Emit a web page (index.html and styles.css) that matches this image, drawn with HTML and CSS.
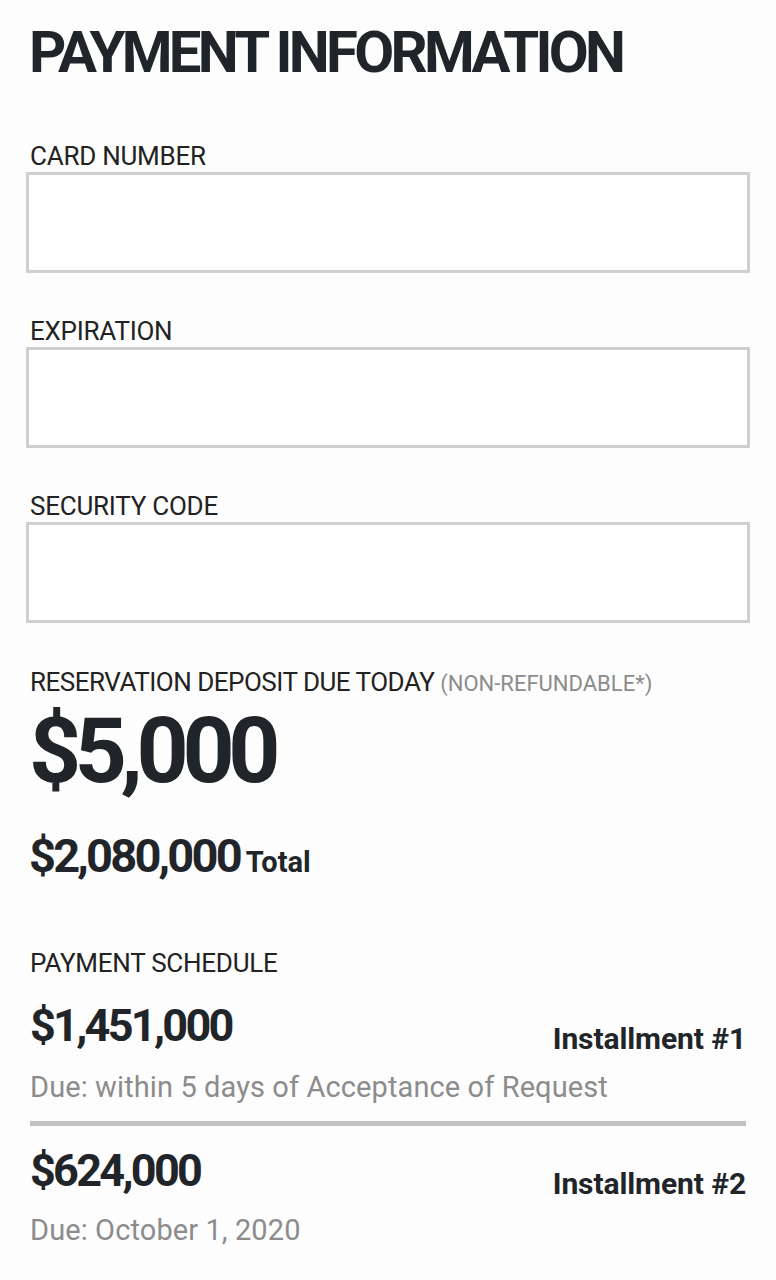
FILE: index.html
```html
<!DOCTYPE html>
<html lang="en">
<head>
<meta charset="utf-8">
<title>Payment Information</title>
<link rel="stylesheet" href="styles.css">
</head>
<body>
<main class="page">
  <h1 class="title">PAYMENT INFORMATION</h1>

  <div class="field first">
    <label class="label" for="card">CARD NUMBER</label>
    <input class="input" id="card" type="text">
  </div>
  <div class="field">
    <label class="label" for="exp">EXPIRATION</label>
    <input class="input" id="exp" type="text">
  </div>
  <div class="field">
    <label class="label" for="cvc">SECURITY CODE</label>
    <input class="input" id="cvc" type="text">
  </div>

  <section class="deposit">
    <div class="label tight">RESERVATION DEPOSIT DUE TODAY <span class="note">(NON-REFUNDABLE*)</span></div>
    <div class="deposit-amount">$5,000</div>
    <div class="total"><span class="total-amount">$2,080,000</span> <span class="total-word">Total</span></div>
  </section>

  <section class="schedule">
    <div class="label">PAYMENT SCHEDULE</div>
    <div class="installment">
      <div class="inst-row">
        <span class="inst-amount">$1,451,000</span>
        <span class="inst-name">Installment #1</span>
      </div>
      <div class="inst-due">Due: within 5 days of Acceptance of Request</div>
    </div>
    <div class="installment second">
      <div class="inst-row">
        <span class="inst-amount">$624,000</span>
        <span class="inst-name">Installment #2</span>
      </div>
      <div class="inst-due">Due: October 1, 2020</div>
    </div>
  </section>
</main>
</body>
</html>
```

FILE: styles.css
```css
html, body {
  margin: 0;
  padding: 0;
  background: #fdfdfd;
}
body {
  font-family: Roboto, "Liberation Sans", Arial, sans-serif;
  color: #212529;
}
.page {
  padding: 22px 26px 0 26px;
}
.title {
  margin: 0 0 0 3px;
  font-size: 58px;
  line-height: 60px;
  font-weight: 700;
  letter-spacing: -3.7px;
}
.field {
  display: flex;
  flex-direction: column;
  margin-top: 43px;
}
.field.first {
  margin-top: 59px;
}
.label {
  display: block;
  margin-left: 4px;
  font-size: 26px;
  line-height: 30px;
  font-weight: 400;
  letter-spacing: -0.25px;
  color: #222;
}
.label.tight {
  letter-spacing: -0.5px;
}
.input {
  box-sizing: border-box;
  margin: 1px 0 0 0;
  width: 724px;
  height: 101px;
  border: 3px solid #cfcfcf;
  background: #fff;
  border-radius: 0;
  outline: none;
  padding: 0 12px;
}
.deposit {
  margin-top: 44px;
}
.note {
  font-size: 22px;
  color: #8c8c8c;
  letter-spacing: 0;
}
.deposit-amount {
  margin: 7px 0 0 3px;
  font-size: 91px;
  line-height: 90px;
  font-weight: 700;
  letter-spacing: -6.4px;
}
.total {
  margin: 35px 0 0 3px;
  line-height: 50px;
}
.total-amount {
  font-size: 47px;
  font-weight: 700;
  letter-spacing: -2.8px;
  margin-right: 2px;
}
.total-word {
  font-size: 29px;
  font-weight: 700;
  letter-spacing: 0;
}
.schedule {
  margin-top: 56px;
}
.installment {
  margin: 23px 4px 0 4px;
  padding-bottom: 16px;
  border-bottom: 5px solid #c2c2c2;
}
.installment.second {
  margin-top: 0;
  padding-top: 20px;
  border-bottom: none;
}
.inst-row {
  display: flex;
  justify-content: space-between;
  align-items: flex-end;
}
.inst-amount {
  font-size: 45px;
  line-height: 50px;
  font-weight: 700;
  letter-spacing: -2.7px;
}
.inst-name {
  font-size: 30px;
  line-height: 30px;
  font-weight: 700;
  letter-spacing: -0.1px;
  margin-bottom: -3px;
}
.inst-due {
  margin-top: 18px;
  font-size: 29px;
  line-height: 36px;
  color: #8c8c8c;
  letter-spacing: 0.1px;
}
.installment.second .inst-due {
  margin-top: 16px;
}
```
